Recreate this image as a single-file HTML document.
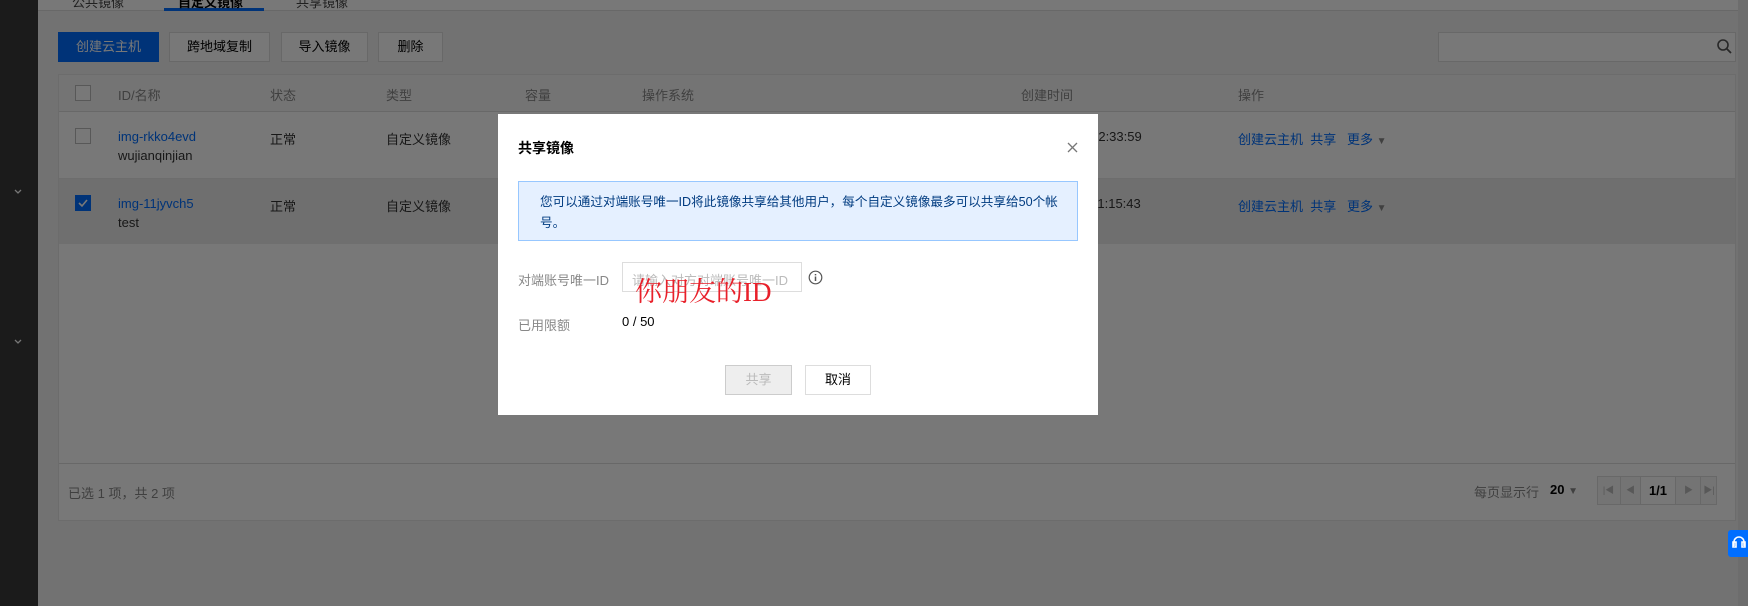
<!DOCTYPE html>
<html><head><meta charset="utf-8"><style>
*{margin:0;padding:0;box-sizing:border-box}
body{width:1748px;height:606px;overflow:hidden;background:#f2f2f2;font-family:"Liberation Sans","Noto Sans CJK SC",sans-serif;font-size:13px;color:#333;position:relative}
.abs{position:absolute}
.side{left:0;top:0;width:38px;height:606px;background:#3a3a3a}
.btn{position:absolute;top:32px;height:30px;border:1px solid #ddd;background:#fff;text-align:center;line-height:28px;color:#000}
.panel{left:58px;top:74px;width:1678px;height:447px;background:#fff;border:1px solid #e5e5e5}
.t{position:absolute;white-space:nowrap}
.hd{color:#888}
.lnk{color:#006eff}
.cb{position:absolute;width:16px;height:16px;border:1px solid #bbb;background:#fff}
.ov{left:0;top:0;width:1748px;height:606px;background:rgba(0,0,0,.53)}
.modal{left:498px;top:114px;width:600px;height:301px;background:#fff}
.pg{position:absolute;top:476px;height:29px;width:24px;border-right:1px solid #ddd;color:#bbb;font-size:9px;text-align:center;line-height:28px}
</style></head><body>
<div class="abs side"></div>
<div class="abs" style="left:38px;top:0;width:1710px;height:11px;background:#fff;border-bottom:1px solid #ddd"></div>
<div class="abs" style="left:164px;top:8px;width:100px;height:3px;background:#006eff"></div>
<div class="t" style="left:72px;top:-8px;color:#444">公共镜像</div>
<div class="t" style="left:178px;top:-8px;color:#000;font-weight:bold">自定义镜像</div>
<div class="t" style="left:296px;top:-8px;color:#444">共享镜像</div>
<div class="btn" style="left:58px;width:101px;background:#006eff;border-color:#006eff;color:#fff">创建云主机</div>
<div class="btn" style="left:169px;width:101px">跨地域复制</div>
<div class="btn" style="left:281px;width:87px">导入镜像</div>
<div class="btn" style="left:378px;width:65px">删除</div>
<div class="abs" style="left:1438px;top:32px;width:298px;height:30px;background:#fff;border:1px solid #ddd"></div>
<svg class="abs" style="left:1716px;top:38px" width="16" height="16" viewBox="0 0 16 16"><circle cx="7" cy="7" r="5" fill="none" stroke="#555" stroke-width="1.6"/><path d="M11 11l4 4" stroke="#555" stroke-width="1.8"/></svg>
<div class="abs panel"></div>
<div class="abs" style="left:59px;top:75px;width:1676px;height:37px;background:#f6f6f6;border-bottom:1px solid #ddd"></div>
<div class="abs" style="left:59px;top:179px;width:1676px;height:65px;background:#ebebeb"></div>
<div class="abs" style="left:59px;top:178px;width:1676px;height:1px;background:#e8e8e8"></div>
<div class="cb" style="left:75px;top:85px"></div>
<div class="t hd" style="left:118px;top:85px">ID/名称</div>
<div class="t hd" style="left:270px;top:85px">状态</div>
<div class="t hd" style="left:386px;top:85px">类型</div>
<div class="t hd" style="left:525px;top:85px">容量</div>
<div class="t hd" style="left:642px;top:85px">操作系统</div>
<div class="t hd" style="left:1021px;top:85px">创建时间</div>
<div class="t hd" style="left:1238px;top:85px">操作</div>
<div class="cb" style="left:75px;top:128px"></div>
<div class="t lnk" style="left:118px;top:129px">img-rkko4evd</div>
<div class="t" style="left:118px;top:148px">wujianqinjian</div>
<div class="t" style="left:270px;top:129px">正常</div>
<div class="t" style="left:386px;top:129px">自定义镜像</div>
<div class="t" style="left:1021px;top:129px">2018-01-10 12:33:59</div>
<div class="t lnk" style="left:1238px;top:129px">创建云主机&nbsp; 共享 &nbsp; 更多 <span style="color:#888;font-size:10px">▼</span></div>
<div class="cb" style="left:75px;top:195px;background:#006eff;border-color:#006eff"><svg width="14" height="14" viewBox="0 0 14 14" style="display:block"><path d="M3 7l3 3 5-6" stroke="#fff" stroke-width="1.6" fill="none"/></svg></div>
<div class="t lnk" style="left:118px;top:196px">img-11jyvch5</div>
<div class="t" style="left:118px;top:215px">test</div>
<div class="t" style="left:270px;top:196px">正常</div>
<div class="t" style="left:386px;top:196px">自定义镜像</div>
<div class="t" style="left:1021px;top:196px">2018-01-10 11:15:43</div>
<div class="t lnk" style="left:1238px;top:196px">创建云主机&nbsp; 共享 &nbsp; 更多 <span style="color:#888;font-size:10px">▼</span></div>
<div class="abs" style="left:59px;top:463px;width:1676px;height:1px;background:#ddd"></div>
<div class="t" style="left:68px;top:483px;color:#888">已选 1 项，共 2 项</div>
<div class="t" style="left:1474px;top:482px;color:#888">每页显示行</div>
<div class="t" style="left:1550px;top:482px;color:#000;font-weight:bold">20 <span style="color:#888;font-size:10px">▼</span></div>
<div class="abs" style="left:1597px;top:476px;width:120px;height:29px;border:1px solid #ddd;background:#f6f6f6"></div>
<div class="pg" style="left:1597px">|◀</div>
<div class="pg" style="left:1619px">◀</div>
<div class="pg" style="left:1677px">▶</div>
<div class="pg" style="left:1697px;border-right:0">▶|</div>
<div class="abs" style="left:1640px;top:476px;width:36px;height:29px;background:#fff;border:1px solid #ddd;text-align:center;line-height:27px;font-weight:bold;color:#000">1/1</div>
<div class="abs" style="left:1738px;top:0;width:10px;height:606px;background:#e8e8e8"></div>
<div class="abs ov"></div>
<div class="abs" style="left:1728px;top:530px;width:20px;height:27px;background:#006eff;border-radius:3px 0 0 3px"><svg width="20" height="27" viewBox="0 0 20 27"><path d="M6 16v-4a5 5 0 0 1 10 0v4M5 12h3v5H5zM14 12h3v5h-3z" stroke="#fff" stroke-width="1.6" fill="none"/></svg></div>
<div class="abs modal"></div>
<div class="t" style="left:518px;top:138px;font-size:14px;font-weight:bold;color:#000">共享镜像</div>
<svg class="abs" style="left:1066px;top:141px" width="13" height="13" viewBox="0 0 13 13"><path d="M2 2l9 9M11 2l-9 9" stroke="#777" stroke-width="1.3"/></svg>
<div class="abs" style="left:518px;top:181px;width:560px;height:60px;background:#e5f0ff;border:1px solid #97c7ff"></div>
<div class="t" style="left:540px;top:192px;color:#003b80;line-height:21px;white-space:normal;width:535px;font-size:12.6px">您可以通过对端账号唯一ID将此镜像共享给其他用户，每个自定义镜像最多可以共享给50个帐号。</div>
<div class="t" style="left:518px;top:270px;color:#888">对端账号唯一ID</div>
<div class="abs" style="left:622px;top:262px;width:180px;height:30px;border:1px solid #ddd"></div>
<div class="t" style="left:632px;top:270px;color:#bbb">请输入对方对端账号唯一ID</div>
<svg class="abs" style="left:808px;top:270px" width="15" height="15" viewBox="0 0 15 15"><circle cx="7.5" cy="7.5" r="6.3" fill="none" stroke="#555" stroke-width="1.2"/><path d="M7.5 6.5v4.5M7.5 4v1.4" stroke="#555" stroke-width="1.5"/></svg>
<div class="t" style="left:635px;top:275px;color:#e8202a;font-family:'Liberation Serif','Noto Serif CJK SC',serif;font-size:27px;line-height:34px">你朋友的ID</div>
<div class="t" style="left:518px;top:315px;color:#888">已用限额</div>
<div class="t" style="left:622px;top:314px;color:#000">0 / 50</div>
<div class="abs" style="left:725px;top:365px;width:67px;height:30px;background:#eee;border:1px solid #ccc;color:#bbb;text-align:center;line-height:28px">共享</div>
<div class="abs" style="left:805px;top:365px;width:66px;height:30px;background:#fff;border:1px solid #ddd;color:#000;text-align:center;line-height:28px">取消</div>
<svg class="abs" style="left:13px;top:188px" width="10" height="8" viewBox="0 0 10 8"><path d="M2 2l3 3 3-3" stroke="#777" stroke-width="1.3" fill="none"/></svg>
<svg class="abs" style="left:13px;top:338px" width="10" height="8" viewBox="0 0 10 8"><path d="M2 2l3 3 3-3" stroke="#777" stroke-width="1.3" fill="none"/></svg>
</body></html>
